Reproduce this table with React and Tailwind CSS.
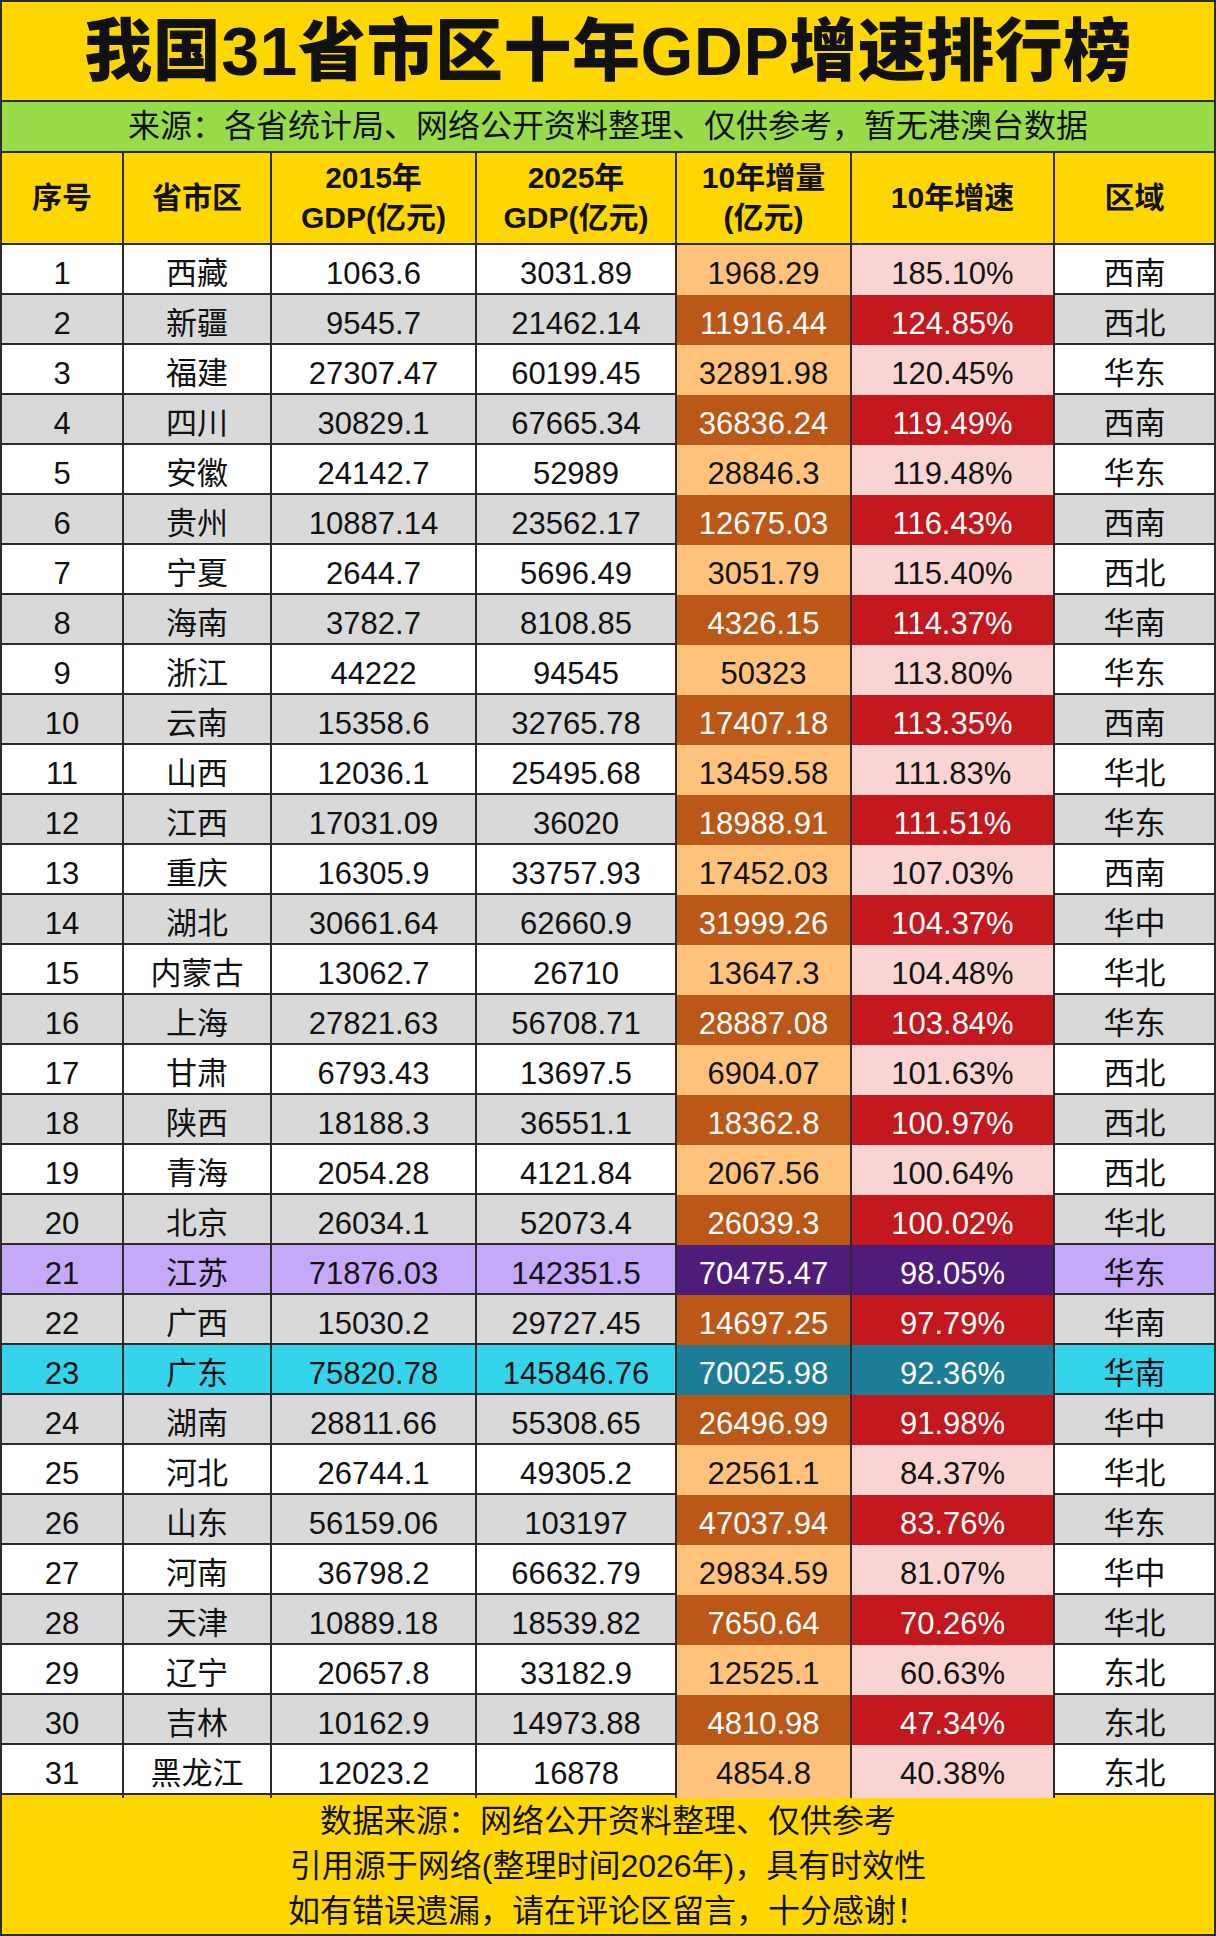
const rows = [
  [1, "西藏", "1063.6", "3031.89", "1968.29", "185.10%", "西南"],
  [2, "新疆", "9545.7", "21462.14", "11916.44", "124.85%", "西北"],
  [3, "福建", "27307.47", "60199.45", "32891.98", "120.45%", "华东"],
  [4, "四川", "30829.1", "67665.34", "36836.24", "119.49%", "西南"],
  [5, "安徽", "24142.7", "52989", "28846.3", "119.48%", "华东"],
  [6, "贵州", "10887.14", "23562.17", "12675.03", "116.43%", "西南"],
  [7, "宁夏", "2644.7", "5696.49", "3051.79", "115.40%", "西北"],
  [8, "海南", "3782.7", "8108.85", "4326.15", "114.37%", "华南"],
  [9, "浙江", "44222", "94545", "50323", "113.80%", "华东"],
  [10, "云南", "15358.6", "32765.78", "17407.18", "113.35%", "西南"],
  [11, "山西", "12036.1", "25495.68", "13459.58", "111.83%", "华北"],
  [12, "江西", "17031.09", "36020", "18988.91", "111.51%", "华东"],
  [13, "重庆", "16305.9", "33757.93", "17452.03", "107.03%", "西南"],
  [14, "湖北", "30661.64", "62660.9", "31999.26", "104.37%", "华中"],
  [15, "内蒙古", "13062.7", "26710", "13647.3", "104.48%", "华北"],
  [16, "上海", "27821.63", "56708.71", "28887.08", "103.84%", "华东"],
  [17, "甘肃", "6793.43", "13697.5", "6904.07", "101.63%", "西北"],
  [18, "陕西", "18188.3", "36551.1", "18362.8", "100.97%", "西北"],
  [19, "青海", "2054.28", "4121.84", "2067.56", "100.64%", "西北"],
  [20, "北京", "26034.1", "52073.4", "26039.3", "100.02%", "华北"],
  [21, "江苏", "71876.03", "142351.5", "70475.47", "98.05%", "华东"],
  [22, "广西", "15030.2", "29727.45", "14697.25", "97.79%", "华南"],
  [23, "广东", "75820.78", "145846.76", "70025.98", "92.36%", "华南"],
  [24, "湖南", "28811.66", "55308.65", "26496.99", "91.98%", "华中"],
  [25, "河北", "26744.1", "49305.2", "22561.1", "84.37%", "华北"],
  [26, "山东", "56159.06", "103197", "47037.94", "83.76%", "华东"],
  [27, "河南", "36798.2", "66632.79", "29834.59", "81.07%", "华中"],
  [28, "天津", "10889.18", "18539.82", "7650.64", "70.26%", "华北"],
  [29, "辽宁", "20657.8", "33182.9", "12525.1", "60.63%", "东北"],
  [30, "吉林", "10162.9", "14973.88", "4810.98", "47.34%", "东北"],
  [31, "黑龙江", "12023.2", "16878", "4854.8", "40.38%", "东北"],
];

const cols = "grid grid-cols-[120px_148px_205px_200px_175px_203px_161px]";
const font = { fontFamily: '"Liberation Sans", "Noto Sans CJK SC", sans-serif' };

function rowTheme(no) {
  if (no === 21)
    return { base: "bg-[#c6a8f9] text-[#111]", inc: "bg-[#4f1c7c] text-white", rate: "bg-[#4f1c7c] text-white" };
  if (no === 23)
    return { base: "bg-[#33d4ec] text-[#111]", inc: "bg-[#1d7c96] text-white", rate: "bg-[#1d7c96] text-white" };
  if (no % 2 === 0)
    return { base: "bg-[#d9d9d9] text-[#111]", inc: "bg-[#bb5818] text-white", rate: "bg-[#c2181e] text-white" };
  return { base: "bg-white text-[#111]", inc: "bg-[#ffc27b] text-[#111]", rate: "bg-[#f9d4d2] text-[#111]" };
}

function Cell({ children, className = "", first }) {
  return (
    <div
      className={`flex items-center justify-center ${first ? "" : "border-l-2 border-[#2b2b2b]"} ${className}`}
    >
      {children}
    </div>
  );
}

export default function App() {
  return (
    <div
      className="w-[1216px] h-[1936px] border-2 border-[#2b2b2b] bg-[#ffd700] flex flex-col text-[#111]"
      style={font}
    >
      <div className="h-[100px] border-b-2 border-[#2b2b2b] flex items-center justify-center text-[68px] font-black tracking-[0.5px]">
        我国31省市区十年GDP增速排行榜
      </div>
      <div className="h-[51px] border-b-2 border-[#2b2b2b] bg-[#98dc4c] flex items-center justify-center text-[32px]">
        来源：各省统计局、网络公开资料整理、仅供参考，暂无港澳台数据
      </div>
      <div className={`${cols} h-[93px] border-b-2 border-[#2b2b2b] text-[30px] font-bold leading-[40px] text-center`}>
        <Cell first>序号</Cell>
        <Cell>省市区</Cell>
        <Cell>
          <div>2015年<br />GDP(亿元)</div>
        </Cell>
        <Cell>
          <div>2025年<br />GDP(亿元)</div>
        </Cell>
        <Cell>
          <div>10年增量<br />(亿元)</div>
        </Cell>
        <Cell>10年增速</Cell>
        <Cell>区域</Cell>
      </div>
      {rows.map((r) => {
        const t = rowTheme(r[0]);
        return (
          <div key={r[0]} className={`${cols} h-[50px] border-b-2 border-[#2b2b2b] text-[31px] ${t.base}`}>
            <Cell first className="pt-[6px]">{r[0]}</Cell>
            <Cell className="pt-[6px]">{r[1]}</Cell>
            <Cell className="pt-[6px]">{r[2]}</Cell>
            <Cell className="pt-[6px]">{r[3]}</Cell>
            <Cell className={`pt-[6px] ${t.inc}`}>{r[4]}</Cell>
            <Cell className={`pt-[6px] ${t.rate}`}>{r[5]}</Cell>
            <Cell className="pt-[6px]">{r[6]}</Cell>
          </div>
        );
      })}
      <div className="flex-1 flex flex-col items-center justify-center text-[32px] leading-[45px] pt-[4px]">
        <p>数据来源：网络公开资料整理、仅供参考</p>
        <p>引用源于网络(整理时间2026年)，具有时效性</p>
        <p>如有错误遗漏，请在评论区留言，十分感谢！</p>
      </div>
    </div>
  );
}
